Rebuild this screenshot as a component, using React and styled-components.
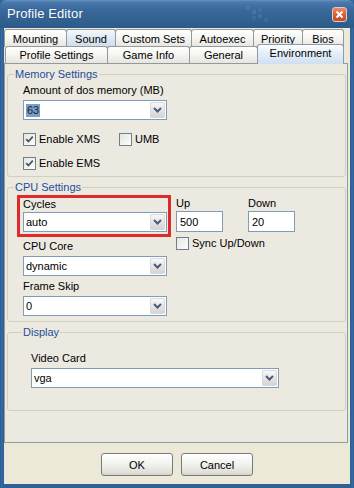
import React from "react";
import styled, { createGlobalStyle, css } from "styled-components";

const GlobalStyle = createGlobalStyle`
  html, body { margin: 0; padding: 0; background: #ece9d8; }
  body { font-family: "Liberation Sans", Arial, sans-serif; font-size: 11px; color: #000; }
  * { box-sizing: border-box; }
`;

const Window = styled.div`
  width: 354px;
  height: 488px;
  display: flex;
  flex-direction: column;
  background: linear-gradient(90deg, #1f4f84 0, #3a6fa6 1px, #2f6096 3px, #2f6096 calc(100% - 3px), #3a6fa6 calc(100% - 1px), #1f4f84 100%);
`;

const TitleBar = styled.div`
  position: relative;
  height: 28px;
  flex: none;
  display: flex;
  align-items: center;
  justify-content: space-between;
  padding: 0 7px 0 7px;
  background: linear-gradient(180deg, #6b93c0 0, #4a7aae 2px, #3b6b9f 8px, #30618f 20px, #2c5b8b 28px);
  border-radius: 6px 6px 0 0;
`;

const TitleText = styled.span`
  color: #fff;
  font-size: 13px;
  line-height: 16px;
  letter-spacing: 0.1px;
  text-shadow: 0 0 1px rgba(0, 0, 0, 0.2);
`;

const Deco = styled.svg`
  position: absolute;
  left: 244px;
  top: 4px;
`;

const CloseButton = styled.div`
  width: 15px;
  height: 15px;
  border-radius: 3px;
  border: 1px solid #e8c9bf;
  background: linear-gradient(180deg, #e98a6a 0, #d8603b 50%, #c44a28 100%);
  display: flex;
  align-items: center;
  justify-content: center;
`;

const Client = styled.div`
  flex: 1;
  margin: 0 4px 4px 4px;
  background: #ece9d8;
  display: flex;
  flex-direction: column;
`;

const TabRow = styled.div`
  display: flex;
  align-items: flex-end;
  height: ${(p) => p.$h}px;
  padding-left: ${(p) => p.$indent || 0}px;
  position: relative;
  z-index: ${(p) => (p.$front ? 2 : 1)};
`;

const Tab = styled.div`
  width: ${(p) => p.$w}px;
  height: ${(p) => p.$h}px;
  margin-right: -1px;
  border: 1px solid #919b9c;
  border-bottom: none;
  border-radius: 3px 3px 0 0;
  background: linear-gradient(180deg, #ffffff 0, #f7f7f4 40%, #e6e5df 100%);
  display: flex;
  align-items: center;
  justify-content: center;
  font-size: 11px;
  white-space: nowrap;
  ${(p) =>
    p.$hot &&
    css`
      background: linear-gradient(180deg, #f4f8fc 0, #dde8f3 50%, #cfdcea 100%);
    `}
  ${(p) =>
    p.$selected &&
    css`
      height: ${p.$h + 3}px;
      margin-bottom: -1px;
      padding-bottom: 3px;
      background: linear-gradient(180deg, #ffffff 0, #eaf2fa 30%, #cfe0f0 100%);
      border-color: #8a9aa8;
    `}
`;

const Panel = styled.div`
  flex: 1;
  margin-right: 2px;
  border: 1px solid #919b9c;
  background: #ece9e0;
  padding: 0 1px 0 2px;
  display: flex;
  flex-direction: column;
  position: relative;
  z-index: 1;
`;

const Group = styled.fieldset`
  margin: 4px 0 0 0;
  border: 1px solid #d0d0bf;
  border-radius: 3px;
  padding: ${(p) => p.$pt}px 0 ${(p) => p.$pb}px ${(p) => p.$pl}px;
  min-width: 0;
`;

const Legend = styled.legend`
  margin-left: -9px;
  padding: 0 1px;
  font-size: 11px;
  line-height: 13px;
  color: #1e4e9a;
`;

const Label = styled.div`
  font-size: 11px;
  line-height: 13px;
  margin-top: ${(p) => p.$mt || 0}px;
  white-space: nowrap;
`;

const SelectBox = styled.div`
  width: ${(p) => p.$w}px;
  height: 20px;
  margin-top: ${(p) => (p.$mt === undefined ? 3 : p.$mt)}px;
  border: 1px solid #7f9db9;
  background: #fff;
  display: flex;
  align-items: stretch;
`;

const SelectValue = styled.div`
  flex: 1;
  display: flex;
  align-items: center;
  padding-left: 2px;
  font-size: 11px;
`;

const Highlight = styled.span`
  background: #7d9cc3;
  color: #0d1f3c;
  padding: 0 1px;
  line-height: 13px;
`;

const DropButton = styled.div`
  width: 15px;
  margin: 1px;
  border-radius: 1px;
  background: linear-gradient(180deg, #f7f7f7 0, #e6e6e6 50%, #d3d3d3 100%);
  border: 1px solid #dadada;
  display: flex;
  align-items: center;
  justify-content: center;
`;

const TextInput = styled.div`
  width: 47px;
  height: 21px;
  margin-top: 1px;
  border: 1px solid #7f9db9;
  background: #fff;
  padding-left: 3px;
  display: flex;
  align-items: center;
  font-size: 11px;
`;

const CheckRow = styled.div`
  display: grid;
  grid-template-columns: ${(p) => p.$cols || "auto"};
  align-items: center;
  margin-top: ${(p) => p.$mt || 0}px;
`;

const CheckItem = styled.label`
  display: flex;
  align-items: center;
  gap: 3px;
  font-size: 11px;
  line-height: 13px;
  white-space: nowrap;
`;

const Box = styled.span`
  width: 13px;
  height: 13px;
  border: 1px solid #6f7f90;
  background: linear-gradient(135deg, #e6e6e0 0, #fdfdfb 100%);
  display: flex;
  align-items: center;
  justify-content: center;
`;

const CpuGrid = styled.div`
  display: flex;
  gap: 9px;
`;

const Column = styled.div`
  display: flex;
  flex-direction: column;
  width: ${(p) => (p.$w ? `${p.$w}px` : "auto")};
`;

const Highlighted = styled.div`
  margin: 0 -4px 0 -6px;
  border: 3px solid #de2a2a;
  padding: 0 1px 2px 3px;
`;

const FieldPair = styled.div`
  display: flex;
  gap: 25px;
  margin-top: 2px;
`;

const ButtonRow = styled.div`
  flex: none;
  height: 41px;
  padding-top: 10px;
  display: flex;
  justify-content: center;
  align-items: flex-start;
  gap: 8px;
`;

const Button = styled.button`
  width: 72px;
  height: 23px;
  border: 1px solid #7b7b76;
  border-radius: 3px;
  background: linear-gradient(180deg, #ffffff 0, #f3f3f0 45%, #e1e0da 85%, #d4d3cc 100%);
  font-family: "Liberation Sans", Arial, sans-serif;
  font-size: 11px;
  color: #000;
  padding: 0;
`;

const Chevron = () => (
  <svg width="9" height="6" viewBox="0 0 9 6">
    <path d="M1 1 L4.5 4.5 L8 1" fill="none" stroke="#4c5b74" strokeWidth="2" />
  </svg>
);

const Select = ({ w, value, mt, selected }) => (
  <SelectBox $w={w} $mt={mt}>
    <SelectValue>{selected ? <Highlight>{value}</Highlight> : value}</SelectValue>
    <DropButton>
      <Chevron />
    </DropButton>
  </SelectBox>
);

const Check = ({ checked, label }) => (
  <CheckItem>
    <Box>
      {checked && (
        <svg width="9" height="9" viewBox="0 0 9 9">
          <path d="M1.2 4.2 L3.4 6.5 L7.8 1.6" fill="none" stroke="#4a5566" strokeWidth="1.8" />
        </svg>
      )}
    </Box>
    {label}
  </CheckItem>
);

const row1 = [
  ["Mounting", 63],
  ["Sound", 50, "hot"],
  ["Custom Sets", 77],
  ["Autoexec", 63],
  ["Priority", 50],
  ["Bios", 42],
];
const row2 = [
  ["Profile Settings", 103],
  ["Game Info", 83],
  ["General", 69],
  ["Environment", 87, "sel"],
];

export default function App() {
  return (
    <>
      <GlobalStyle />
      <Window>
        <TitleBar>
          <TitleText>Profile Editor</TitleText>
          <Deco width="30" height="22" viewBox="0 0 30 22">
            <rect x="2" y="2" width="4" height="4" fill="#fff" opacity="0.07" />
            <rect x="8" y="6" width="4" height="4" fill="#fff" opacity="0.09" />
            <rect x="14" y="10" width="4" height="4" fill="#fff" opacity="0.08" />
            <rect x="8" y="12" width="4" height="4" fill="#fff" opacity="0.06" />
            <rect x="20" y="14" width="4" height="4" fill="#fff" opacity="0.06" />
            <rect x="14" y="4" width="4" height="4" fill="#fff" opacity="0.05" />
          </Deco>
          <CloseButton>
            <svg width="9" height="9" viewBox="0 0 9 9">
              <path d="M1.5 1.5 L7.5 7.5 M7.5 1.5 L1.5 7.5" stroke="#fff" strokeWidth="2" />
            </svg>
          </CloseButton>
        </TitleBar>
        <Client>
          <TabRow $h={19}>
            {row1.map(([t, w, s]) => (
              <Tab key={t} $w={w} $h={18} $hot={s === "hot"}>
                {t}
              </Tab>
            ))}
          </TabRow>
          <TabRow $h={16} $indent={1} $front>
            {row2.map(([t, w, s]) => (
              <Tab key={t} $w={w} $h={17} $selected={s === "sel"}>
                {t}
              </Tab>
            ))}
          </TabRow>
          <Panel>
            <Group $pt={3} $pb={6} $pl={15}>
              <Legend>Memory Settings</Legend>
              <Label>Amount of dos memory (MB)</Label>
              <Select w={144} value="63" selected />
              <CheckRow $mt={13} $cols="96px auto">
                <Check checked label="Enable XMS" />
                <Check label="UMB" />
              </CheckRow>
              <CheckRow $mt={11}>
                <Check checked label="Enable EMS" />
              </CheckRow>
            </Group>
            <Group $pt={1} $pb={5} $pl={15}>
              <Legend>CPU Settings</Legend>
              <CpuGrid>
                <Column $w={144}>
                  <Highlighted>
                    <Label>Cycles</Label>
                    <Select w={144} value="auto" mt={1} />
                  </Highlighted>
                  <Label $mt={3}>CPU Core</Label>
                  <Select w={144} value="dynamic" />
                  <Label $mt={4}>Frame Skip</Label>
                  <Select w={144} value="0" />
                </Column>
                <Column>
                  <FieldPair>
                    <Column>
                      <Label>Up</Label>
                      <TextInput>500</TextInput>
                    </Column>
                    <Column>
                      <Label>Down</Label>
                      <TextInput>20</TextInput>
                    </Column>
                  </FieldPair>
                  <CheckRow $mt={5}>
                    <Check label="Sync Up/Down" />
                  </CheckRow>
                </Column>
              </CpuGrid>
            </Group>
            <Group $pt={13} $pb={22} $pl={23}>
              <Legend>Display</Legend>
              <Label>Video Card</Label>
              <Select w={248} value="vga" />
            </Group>
          </Panel>
          <ButtonRow>
            <Button>OK</Button>
            <Button>Cancel</Button>
          </ButtonRow>
        </Client>
      </Window>
    </>
  );
}
